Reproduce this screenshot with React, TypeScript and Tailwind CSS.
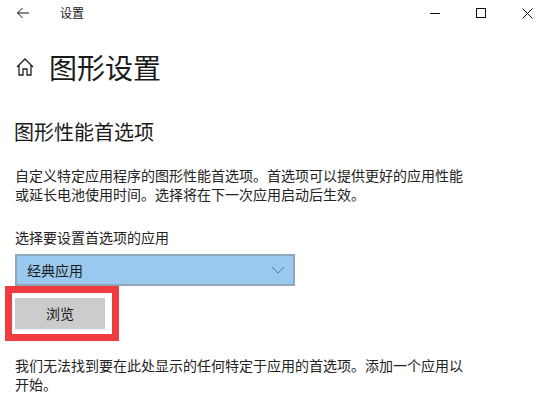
export default function App() {
  const cjk = { fontFamily: '"Noto Sans CJK SC", "Liberation Sans", sans-serif' };
  return (
    <div className="w-[545px] h-[411px] overflow-hidden bg-white text-[#1a1a1a] flex flex-col" style={cjk}>
      <div className="h-[26px] flex items-center shrink-0">
        <div className="w-[46px] flex justify-center">
          <svg width="14" height="12" viewBox="0 0 14 12" fill="none" stroke="#111" strokeWidth="1">
            <path d="M13 6H1.5M6.5 1L1.5 6l5 5" />
          </svg>
        </div>
        <span className="ml-[14px] text-[12px] leading-none">设置</span>
        <div className="ml-auto mr-[-5px] flex items-center">
          <div className="w-[46px] flex justify-center">
            <svg width="10" height="10" viewBox="0 0 10 10" stroke="#111" strokeWidth="1"><path d="M0 5.5h10" /></svg>
          </div>
          <div className="w-[46px] flex justify-center">
            <svg width="10" height="10" viewBox="0 0 10 10" fill="none" stroke="#111" strokeWidth="1"><rect x="0.5" y="0.5" width="9" height="9" /></svg>
          </div>
          <div className="w-[46px] flex justify-center">
            <svg width="11" height="11" viewBox="0 0 11 11" fill="none" stroke="#111" strokeWidth="1"><path d="M.5.5l10 10M10.5.5l-10 10" /></svg>
          </div>
        </div>
      </div>
      <div className="h-[56px] mt-[13px] pl-[16px] flex items-center shrink-0">
        <svg width="18" height="20" viewBox="0 0 18 20" fill="none" stroke="#222" strokeWidth="1.3">
          <path d="M1 10L9 2l8 8M3 8.5V18h4v-6h4v6h4V8.5" />
        </svg>
        <span className="ml-[15px] text-[28px] leading-none">图形设置</span>
      </div>
      <div className="pl-[15px] flex flex-col">
        <div className="mt-[23px] text-[20px] leading-[28px] h-[28px] ml-[-1px]">图形性能首选项</div>
        <p className="mt-[20px] w-[455px] text-[14px] leading-[19px] text-[#222]">
          自定义特定应用程序的图形性能首选项。首选项可以提供更好的应用性能或延长电池使用时间。选择将在下一次应用启动后生效。
        </p>
        <div className="mt-[23px] text-[14px] leading-[20px] text-[#222]">选择要设置首选项的应用</div>
        <div className="mt-[7px] w-[280px] h-[32px] bg-[#99c9ef] border-2 border-[#8fa6bb] flex items-center justify-between pl-[10px] pr-[8px] text-[14px]">
          <span>经典应用</span>
          <svg width="14" height="8" viewBox="0 0 14 8" fill="none" stroke="#5b7d99" strokeWidth="1"><path d="M1 1l6 6 6-6" /></svg>
        </div>
        <div className="ml-[-10px] w-[114px] h-[55px] border-[7px] border-[#f13c3f] flex items-center pl-[3px]">
          <div className="w-[90px] h-[31px] bg-[#cccccc] flex items-center justify-center text-[14px]">浏览</div>
        </div>
        <p className="mt-[15px] w-[455px] text-[14px] leading-[19px] text-[#222]">
          我们无法找到要在此处显示的任何特定于应用的首选项。添加一个应用以开始。
        </p>
      </div>
    </div>
  );
}
